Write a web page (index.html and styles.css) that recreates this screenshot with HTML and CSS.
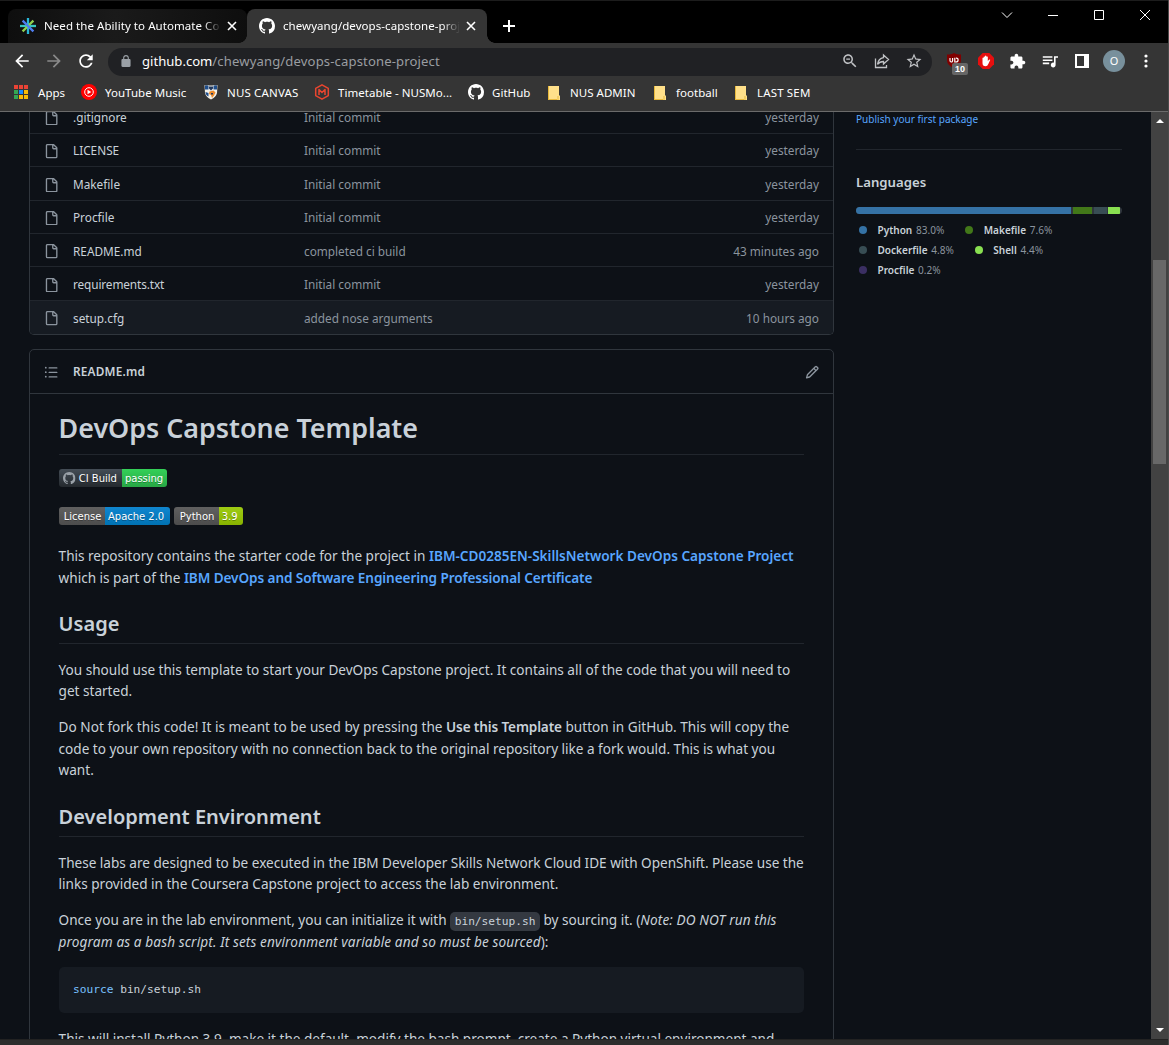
FILE: index.html
```
<!DOCTYPE html>
<html lang="en">
<head>
<meta charset="utf-8">
<title>chewyang/devops-capstone-project</title>
<link rel="stylesheet" href="styles.css">
</head>
<body>
<svg width="0" height="0" class="defs" aria-hidden="true">
  <symbol id="mark" viewBox="0 0 16 16"><path d="M8 0C3.58 0 0 3.58 0 8c0 3.54 2.29 6.53 5.47 7.59.4.07.55-.17.55-.38 0-.19-.01-.82-.01-1.49-2.01.37-2.53-.49-2.69-.94-.09-.23-.48-.94-.82-1.13-.28-.15-.68-.52-.01-.53.63-.01 1.08.58 1.23.82.72 1.21 1.87.87 2.33.66.07-.52.28-.87.51-1.07-1.78-.2-3.64-.89-3.64-3.95 0-.87.31-1.59.82-2.15-.08-.2-.36-1.02.08-2.12 0 0 .67-.21 2.2.82.64-.18 1.32-.27 2-.27.68 0 1.36.09 2 .27 1.53-1.04 2.2-.82 2.2-.82.44 1.1.16 1.92.08 2.12.51.56.82 1.27.82 2.15 0 3.07-1.87 3.75-3.65 3.95.29.25.54.73.54 1.48 0 1.07-.01 1.93-.01 2.2 0 .21.15.46.55.38A8.013 8.013 0 0016 8c0-4.42-3.58-8-8-8z"/></symbol>
  <symbol id="file" viewBox="0 0 16 16"><path d="M2 1.75C2 .784 2.784 0 3.75 0h6.586c.464 0 .909.184 1.237.513l2.914 2.914c.329.328.513.773.513 1.237v9.586A1.75 1.75 0 0 1 13.25 16h-9.5A1.75 1.75 0 0 1 2 14.25Zm1.75-.25a.25.25 0 0 0-.25.25v12.5c0 .138.112.25.25.25h9.5a.25.25 0 0 0 .25-.25V6h-2.75A1.75 1.75 0 0 1 9 4.25V1.5Zm6.75.062V4.25c0 .138.112.25.25.25h2.688l-.011-.013-2.914-2.914-.013-.011Z"/></symbol>
  <symbol id="folder" viewBox="0 0 12 14"><path fill="#ffe08a" d="M0 0h11v9.500h1V14H0z"/><path fill="#e8b93c" d="M0 0h1v14H0zM9.500 10h1v4h-1zM0 13h9v1H0z"/></symbol>
</svg>

<div class="window">
  <header class="tabstrip">
    <div class="tab tab-idle">
      <svg class="favicon" viewBox="0 0 16 16" fill="none" stroke-width="2.300"><path stroke="#29b6d8" d="M8 0v16"/><path stroke="#37c6c0" d="M0 8h16"/><path stroke="#4f7df0" d="M2.600 2.600l10.800 10.800"/><path stroke="#8fd14f" d="M13.400 2.600l-4.400 4.400M7 9l-4.400 4.400"/></svg>
      <span class="tab-title">Need the Ability to Automate Co</span>
      <svg class="close" viewBox="0 0 10 10"><path d="M1 1l8 8M9 1l-8 8"/></svg>
    </div>
    <div class="tab tab-active">
      <svg class="favicon" fill="#fff"><use href="#mark"/></svg>
      <span class="tab-title">chewyang/devops-capstone-proj</span>
      <svg class="close" viewBox="0 0 10 10"><path d="M1 1l8 8M9 1l-8 8"/></svg>
    </div>
    <svg class="newtab" viewBox="0 0 12 12"><path d="M6 0v12M0 6h12" stroke="#fff" stroke-width="2"/></svg>
    <div class="controls">
      <svg viewBox="0 0 12 12"><path d="M1 3.500l5 5 5-5"/></svg>
      <svg viewBox="0 0 12 12"><path d="M1 6.500h10"/></svg>
      <svg viewBox="0 0 12 12"><path d="M1.500 1.500h9v9h-9z"/></svg>
      <svg viewBox="0 0 12 12"><path d="M1 1l10 10M11 1L1 11"/></svg>
    </div>
  </header>

  <div class="toolbar">
    <div class="nav">
      <svg viewBox="0 0 24 24" fill="#fff"><path d="M20 11H7.830l5.590-5.590L12 4l-8 8 8 8 1.410-1.410L7.830 13H20v-2z"/></svg>
      <svg viewBox="0 0 24 24" fill="#8a8a8a"><path d="M12 4l-1.410 1.410L16.170 11H4v2h12.170l-5.580 5.590L12 20l8-8z"/></svg>
      <svg viewBox="0 0 24 24" fill="#fff"><path d="M17.650 6.350C16.200 4.900 14.210 4 12 4c-4.420 0-7.990 3.580-7.990 8s3.570 8 7.990 8c3.730 0 6.840-2.550 7.730-6h-2.080c-.82 2.330-3.040 4-5.650 4-3.310 0-6-2.690-6-6s2.690-6 6-6c1.660 0 3.140.69 4.220 1.780L13 11h7V4l-2.350 2.350z"/></svg>
    </div>
    <div class="omnibox">
      <svg class="lock" viewBox="4 1 16 21" fill="#9aa0a6"><path fill-rule="evenodd" d="M18 8h-1V6c0-2.760-2.240-5-5-5S7 3.240 7 6v2H6c-1.100 0-2 .9-2 2v10c0 1.100.9 2 2 2h12c1.100 0 2-.9 2-2V10c0-1.100-.9-2-2-2zM9 6c0-1.660 1.340-3 3-3s3 1.340 3 3v2H9z"/></svg>
      <span class="url"><b>github.com</b>/chewyang/devops-capstone-project</span>
      <div class="actions">
        <svg viewBox="0 0 24 24" fill="#c0c2c5"><path d="M15.500 14h-.79l-.28-.27C15.410 12.590 16 11.110 16 9.500 16 5.910 13.090 3 9.500 3S3 5.910 3 9.500 5.910 16 9.500 16c1.610 0 3.090-.59 4.230-1.570l.27.28v.79l5 4.990L20.490 19l-4.990-5zm-6 0C7.010 14 5 11.990 5 9.500S7.010 5 9.500 5 14 7.010 14 9.500 11.990 14 9.500 14zM7 8.700h5v1.600H7z"/></svg>
        <svg viewBox="0 0 18 18" fill="none" stroke="#c0c2c5" stroke-width="1.300"><path d="M2.500 6.500v9h11V13M10.500 3l5 4.500-5 4.500V9.500c-2.500 0-4.500.8-6 2.800.5-3.500 2.500-6 6-6.600z"/></svg>
        <svg viewBox="0 0 24 24" fill="#c0c2c5"><path d="M22 9.240l-7.190-.62L12 2 9.190 8.630 2 9.240l5.460 4.730L5.820 21 12 17.270 18.180 21l-1.630-7.030L22 9.240zM12 15.400l-3.760 2.270 1-4.280-3.320-2.880 4.380-.38L12 6.100l1.710 4.040 4.380.38-3.320 2.880 1 4.280L12 15.400z"/></svg>
      </div>
    </div>
    <div class="extensions">
      <span class="shield">
        <svg viewBox="0 0 14 15"><path fill="#800000" d="M7 0c2 1.200 4 1.600 7 1.600V7c0 4-3 6.500-7 8-4-1.500-7-4-7-8V1.600C3 1.600 5 1.200 7 0z"/><path fill="none" stroke="#fff" stroke-width="1.200" d="M3 5v2.500q0 1.500 1.300 1.500T5.600 7.500V5M7.800 4.800V9h1q2.300 0 2.300-2T9 5.200"/></svg>
        <span class="count">10</span>
      </span>
      <svg viewBox="0 0 16 16"><path fill="#e60f0f" d="M4.700 0h6.600L16 4.700v6.600L11.300 16H4.700L0 11.300V4.700z"/><path fill="#fff" d="M4.500 8.500V5q.6-.8 1.200 0V3.800q.6-.8 1.300 0V3q.7-.8 1.400 0v.8q.7-.8 1.400 0V8l1.500-1.500q1-.2.900.6L10.300 11q-.8 2.300-2.700 2.300-3.100 0-3.100-3.300z"/></svg>
      <svg viewBox="0 0 24 24" fill="#fff" class="s18"><path d="M20.500 11H19V7c0-1.100-.9-2-2-2h-4V3.500C13 2.120 11.880 1 10.500 1S8 2.120 8 3.500V5H4c-1.100 0-1.990.9-1.990 2v3.800H3.500c1.490 0 2.700 1.210 2.700 2.700s-1.210 2.700-2.700 2.700H2V20c0 1.100.9 2 2 2h3.800v-1.500c0-1.490 1.210-2.700 2.700-2.700 1.490 0 2.700 1.210 2.700 2.700V22H17c1.100 0 2-.9 2-2v-4h1.500c1.380 0 2.500-1.120 2.500-2.500S21.880 11 20.500 11z"/></svg>
      <svg viewBox="2 2 20 20" fill="#fff"><path d="M15 6H3v2h12V6zm0 4H3v2h12v-2zM3 16h8v-2H3v2zM17 6v8.180c-.31-.11-.65-.18-1-.18-1.660 0-3 1.340-3 3s1.340 3 3 3 3-1.340 3-3V8h3V6h-5z"/></svg>
      <svg viewBox="0 0 16 16" fill="none"><path stroke="#fff" stroke-width="2" d="M2 2h12v12H2z"/><path fill="#fff" d="M10 2h5v12h-5z"/></svg>
      <span class="avatar">O</span>
      <svg viewBox="0 0 16 16" fill="#fff"><circle cx="8" cy="3" r="1.600"/><circle cx="8" cy="8" r="1.600"/><circle cx="8" cy="13" r="1.600"/></svg>
    </div>
  </div>

  <nav class="bookmarks">
    <a><svg viewBox="0 0 16 16"><path fill="#ea4335" d="M1 1h4v4H1zM6 1h4v4H6zM11 1h4v4h-4z"/><path fill="#34a853" d="M1 6h4v4H1zM1 11h4v4H1z"/><path fill="#1a8cff" d="M6 6h4v4H6z"/><path fill="#fbbc05" d="M11 6h4v4h-4zM6 11h4v4H6zM11 11h4v4h-4z"/></svg>Apps</a>
    <a><svg viewBox="0 0 16 16"><circle cx="8" cy="8" r="8" fill="#f00"/><circle cx="8" cy="8" r="4.300" fill="none" stroke="#fff"/><path fill="#fff" d="M6.500 5.700L10.300 8l-3.800 2.300z"/></svg>YouTube Music</a>
    <a><svg viewBox="0 0 16 16"><path fill="#f3f1ea" d="M1.500 1q2.500 1 3.500 0 3 1 6 0 1.500 1 3.500 0l-.5 8q-1 4-6 6.500-5-2.500-6-6.500z"/><path fill="#1f4e8c" d="M2 1.500h3.500v4H2zM10.500 1.500H14v4h-3.500zM2.500 8l3 1v3.500Q2.500 11 2.500 8z"/><path fill="#ee8a2a" d="M6.500 7.500l4-1 2 2-1.500 3-2 2.500-1-3-2-1z"/><path fill="#243a5e" d="M6 2.500h4v2L8 6.500l-2-2zM8 9h2v1.500H8z"/></svg>NUS CANVAS</a>
    <a><svg viewBox="0 0 16 16" fill="none" stroke="#e8452f" stroke-width="1.500" stroke-linejoin="round"><path d="M8 .8l6.300 3.600v7.200L8 15.200l-6.300-3.600V4.400z"/><path d="M5 11V5.500l3 3 3-3V11"/></svg>Timetable - NUSMo...</a>
    <a><svg fill="#fff"><use href="#mark"/></svg>GitHub</a>
    <a><svg class="fold"><use href="#folder"/></svg>NUS ADMIN</a>
    <a><svg class="fold"><use href="#folder"/></svg>football</a>
    <a><svg class="fold"><use href="#folder"/></svg>LAST SEM</a>
  </nav>

  <div class="viewport">
    <main class="page">
      <div class="files">
        <div class="row"><svg><use href="#file"/></svg><span class="name">.gitignore</span><span class="msg">Initial commit</span><span class="age">yesterday</span></div>
        <div class="row"><svg><use href="#file"/></svg><span class="name">LICENSE</span><span class="msg">Initial commit</span><span class="age">yesterday</span></div>
        <div class="row"><svg><use href="#file"/></svg><span class="name">Makefile</span><span class="msg">Initial commit</span><span class="age">yesterday</span></div>
        <div class="row"><svg><use href="#file"/></svg><span class="name">Procfile</span><span class="msg">Initial commit</span><span class="age">yesterday</span></div>
        <div class="row"><svg><use href="#file"/></svg><span class="name">README.md</span><span class="msg">completed ci build</span><span class="age">43 minutes ago</span></div>
        <div class="row"><svg><use href="#file"/></svg><span class="name tight">requirements.txt</span><span class="msg">Initial commit</span><span class="age">yesterday</span></div>
        <div class="row hover"><svg><use href="#file"/></svg><span class="name">setup.cfg</span><span class="msg">added nose arguments</span><span class="age">10 hours ago</span></div>
      </div>

      <section class="readme">
        <div class="readme-head">
          <svg viewBox="0 0 16 16"><path d="M2 4a1 1 0 100-2 1 1 0 000 2zm3.750-1.500a.75.75 0 000 1.500h8.500a.75.75 0 000-1.500h-8.500zm0 5a.75.75 0 000 1.500h8.500a.75.75 0 000-1.500h-8.500zm0 5a.75.75 0 000 1.500h8.500a.75.75 0 000-1.500h-8.500zM3 8a1 1 0 11-2 0 1 1 0 012 0zm-1 6a1 1 0 100-2 1 1 0 000 2z"/></svg>
          <b>README.md</b>
          <svg viewBox="0 0 16 16"><path d="M11.013 1.427a1.750 1.750 0 012.474 0l1.086 1.086a1.750 1.750 0 010 2.474l-8.610 8.610c-.21.21-.47.364-.756.445l-3.251.93a.75.75 0 01-.927-.928l.929-3.250a1.750 1.750 0 01.445-.758l8.610-8.610zm1.414 1.060a.25.25 0 00-.354 0L10.811 3.750l1.439 1.440 1.263-1.263a.25.25 0 000-.354l-1.086-1.086zM11.189 6.250L9.750 4.810l-6.286 6.287a.25.25 0 00-.064.108l-.558 1.953 1.953-.558a.249.249 0 00.108-.064l6.286-6.286z"/></svg>
        </div>
        <article class="markdown">
          <h1>DevOps Capstone Template</h1>
          <div class="badges">
            <span class="badge ci"><i class="l"><svg fill="#9aa1a8"><use href="#mark"/></svg>CI Build</i><i class="r green">passing</i></span>
          </div>
          <div class="badges">
            <span class="badge lic"><i class="l">License</i><i class="r blue">Apache 2.0</i></span>
            <span class="badge py"><i class="l">Python</i><i class="r lime">3.9</i></span>
          </div>
          <p>This repository contains the starter code for the project in <a>IBM-CD0285EN-SkillsNetwork DevOps Capstone Project</a><br>which is part of the <a class="tight">IBM DevOps and Software Engineering Professional Certificate</a></p>
          <h2>Usage</h2>
          <p>You should use this template to start your DevOps Capstone project. It contains all of the code that you will need to<br>get started.</p>
          <p><span class="loose">Do Not fork this code! It is meant to be used by pressing the <strong>Use this Template</strong> button in GitHub. This will copy the</span><br>code to your own repository with no connection back to the original repository like a fork would. This is what you<br>want.</p>
          <h2>Development Environment</h2>
          <p>These labs are designed to be executed in the IBM Developer Skills Network Cloud IDE with OpenShift. Please use the<br>links provided in the Coursera Capstone project to access the lab environment.</p>
          <p>Once you are in the lab environment, you can initialize it with <code>bin/setup.sh</code> by sourcing it. (<em>Note: DO NOT run this<br>program as a bash script. It sets environment variable and so must be sourced</em>):</p>
          <pre><span>source</span> bin/setup.sh</pre>
          <p>This will install Python 3.9, make it the default, modify the bash prompt, create a Python virtual environment and</p>
        </article>
      </section>
    </main>

    <aside class="sidebar">
      <a class="publish">Publish your first package</a>
      <h3>Languages</h3>
      <div class="langbar"><i class="python"></i><i class="makefile"></i><i class="dockerfile"></i><i class="shell"></i></div>
      <ul class="langs">
        <li><i class="python"></i><b>Python</b>83.0%</li>
        <li><i class="makefile"></i><b>Makefile</b>7.6%</li>
        <li><i class="dockerfile"></i><b>Dockerfile</b>4.8%</li>
        <li><i class="shell"></i><b>Shell</b>4.4%</li>
        <li><i class="procfile"></i><b>Procfile</b>0.2%</li>
      </ul>
    </aside>

    <div class="scrollbar">
      <svg viewBox="0 0 8 4"><path d="M4 0l4 4H0z"/></svg>
      <div class="thumb"></div>
      <svg viewBox="0 0 8 4"><path d="M0 0h8L4 4z"/></svg>
    </div>
  </div>
  <div class="edge"></div>
</div>
</body>
</html>
```
FILE: styles.css
```
* { box-sizing: border-box; }
body {
  margin: 0;
  background: #353535;
  font-family: "Noto Sans", "Open Sans", sans-serif;
  color: #c9d1d9;
  overflow: hidden;
}
svg { display: block; flex: none; }
i { font-style: normal; }
.defs { position: absolute; }
.window { width: 1169px; height: 1045px; display: flex; flex-direction: column; border-right: 1px solid #4a4a4a; }

/* Tab strip */
.tabstrip { height: 43px; background: #000; border-top: 1px solid #1c1c1c; display: flex; align-items: flex-end; padding-left: 8px; flex: none; }
.tab { height: 34px; display: flex; align-items: center; color: #fff; font-size: 11.5px; letter-spacing: .06px; padding: 0 11px 0 12px; white-space: nowrap; }
.tab-idle { width: 239px; padding-right: 10px; border-radius: 8px 8px 8px 0; background: linear-gradient(90deg, #0e0e0e, #1a1a1a 45%, #0e0e0e); }
.tab-active { width: 240px; border-radius: 8px 8px 0 0; background: #353535; position: relative; }
.tab-active::before, .tab-active::after { content: ""; position: absolute; bottom: 0; width: 8px; height: 8px; }
.tab-active::before { left: -8px; background: radial-gradient(circle at 0 0, transparent 7.5px, #353535 8px); }
.tab-active::after { right: -8px; background: radial-gradient(circle at 100% 0, transparent 7.5px, #353535 8px); }
.favicon { width: 16px; height: 16px; }
.tab-title { width: 177px; margin-left: 8px; padding-bottom: 2px; -webkit-mask-image: linear-gradient(90deg, #000 90%, transparent); mask-image: linear-gradient(90deg, #000 90%, transparent); }
.close { width: 10px; height: 10px; margin-left: auto; fill: none; stroke: #fff; stroke-width: 1.6; }
.newtab { width: 12px; height: 12px; margin: 0 0 11px 16px; }
.controls { margin-left: auto; display: flex; gap: 34px; padding: 0 17px 22px 0; }
.controls svg { width: 12px; height: 12px; fill: none; stroke: #fff; stroke-width: 1; }

/* Toolbar */
.toolbar { height: 36px; display: flex; align-items: center; padding: 0 6px; flex: none; }
.nav { display: flex; gap: 14px; padding-left: 7px; width: 102px; }
.nav svg { width: 18px; height: 18px; transform: scale(1.12); }
.omnibox { width: 824px; height: 28px; border-radius: 14px; background: #202124; display: flex; align-items: center; padding: 0 9px 2px 13px; margin-top: 1px; }
.lock { width: 10px; height: 12px; }
.url { margin-left: 11px; font-size: 13.1px; letter-spacing: .13px; color: #9a9da1; white-space: nowrap; }
.url b { font-weight: 400; color: #fff; letter-spacing: 0; }
.actions { margin-left: auto; display: flex; gap: 14px; }
.actions svg { width: 18px; height: 18px; }
.extensions { display: flex; align-items: center; margin-left: 6px; }
.extensions > * { width: 16px; height: 16px; margin: 0 8px; flex: none; }
.extensions > .s18 { width: 17px; height: 17px; margin: 0 8px 0 7px; }
.shield { position: relative; }
.shield svg { width: 14px; height: 15px; margin-left: 1px; }
.count { position: absolute; left: 6px; top: 10px; width: 16px; height: 12px; border-radius: 2px; background: #666; color: #fff; font: 700 9px/12px "Liberation Sans", sans-serif; text-align: center; }
.extensions > .avatar { width: 22px; height: 22px; margin: 0 5px; border-radius: 50%; background: #78909c; color: #fff; font-size: 11px; line-height: 22px; text-align: center; }

/* Bookmarks */
.bookmarks { height: 33px; border-bottom: 1px solid #6b6b6b; display: grid; grid-template-columns: 68px 122px 111px 154px 78px 106px 81px auto; align-items: center; padding: 0 0 6px 13px; font-size: 11.5px; color: #fff; letter-spacing: .03px; white-space: nowrap; flex: none; }
.bookmarks a { display: flex; align-items: center; gap: 8px; }
.bookmarks a:first-child { gap: 9px; }
.bookmarks a:nth-child(3), .bookmarks a:nth-child(8) { letter-spacing: .16px; }
.bookmarks svg { width: 16px; height: 16px; }
.bookmarks .fold { width: 12px; height: 14px; margin: 1px 2px 0; }

/* Page */
.viewport { height: 927px; background: #0d1117; display: flex; overflow: hidden; flex: none; }
.page { width: 805px; margin-left: 29px; flex: none; }
.files { margin-top: -12px; border: 1px solid #30363d; border-top: 0; border-radius: 0 0 5px 5px; height: 235px; overflow: hidden; padding-top: .35px; }
.row { height: 33.4px; border-bottom: 1px solid #21262d; display: flex; align-items: center; font-size: 11.8px; color: #8b949e; padding: .8px 14px 0; white-space: nowrap; }
.row svg { width: 14.4px; height: 14.4px; fill: #8b949e; margin-top: 2px; }
.row .name { width: 231px; margin-left: 14.6px; color: #c9d1d9; }
.row .tight { letter-spacing: -.11px; }
.row .age { margin-left: auto; }
.row.hover { background: #161b22; border-bottom: 0; height: 34px; padding-top: 0; }
.readme { margin-top: 14px; border: 1px solid #30363d; border-radius: 5px 5px 0 0; height: 700px; overflow: hidden; }
.readme-head { height: 44px; border-bottom: 1px solid #30363d; display: flex; align-items: center; padding: 0 14px; font-size: 11.8px; }
.readme-head b { font-weight: 600; margin: 0 auto 0 14.6px; letter-spacing: .21px; padding-bottom: 2px; }
.readme-head svg { width: 14.4px; height: 14.4px; fill: #8b949e; margin-top: 1px; }
.markdown { padding: 16px 29px 0 28.6px; font-size: 13.6px; line-height: 21.6px; }
.markdown p { margin: 0 0 14.4px; white-space: nowrap; letter-spacing: -.015px; }
h1, h2, h3 { font-weight: 600; margin: 0; }
h1 { font-size: 26.85px; line-height: 36px; padding-bottom: 8px; border-bottom: 1px solid #21262d; margin-bottom: 14px; }
h2 { font-size: 20.05px; line-height: 27px; padding-bottom: 6.5px; border-bottom: 1px solid #21262d; margin: 21.6px 0 14.4px; }
.markdown a { color: #58a6ff; font-weight: 600; }
.markdown .tight { letter-spacing: -.09px; }
.markdown .loose { letter-spacing: .02px; }
.markdown strong { font-weight: 600; letter-spacing: -.14px; }
.markdown em { letter-spacing: .12px; }
.badges { display: flex; gap: 4px; height: 18px; margin-bottom: 20px; }
.badge { display: flex; height: 18px; border-radius: 3px; overflow: hidden; font: 10px/18px "DejaVu Sans", sans-serif; color: #fff; text-shadow: 0 1px 0 rgba(1,1,1,.3); }
.badge i { display: flex; align-items: center; justify-content: center; letter-spacing: -.02px; padding-top: 1px; }
.badge .l { background: linear-gradient(#606060, #4c4c4c); }
.badge .l { padding-left: 2px; }
.badge .r { padding-right: 2px; }
.badge svg { width: 12.5px; height: 12.5px; margin: -1px 3px 0 0; }
.badge.ci .l { width: 63px; padding-left: 0; background: linear-gradient(#444d56, #24292e); }
.badge.ci .r { width: 45px; padding-right: 0; }
.green { background: linear-gradient(#34d058, #28a745); }
.lic .l { width: 46px; }
.lic .r { width: 65px; }
.blue { background: linear-gradient(#1086cf, #0072b3); }
.py .l { width: 45px; }
.py .r { width: 24px; }
.lime { background: linear-gradient(#9fcc14, #88b300); }
code, pre { font-family: "DejaVu Sans Mono", monospace; font-size: 11.2px; letter-spacing: 0; }
code { background: #343941; border-radius: 5px; padding: 3px 4.5px; line-height: 12px; }
pre { margin: 0 0 14.4px; background: #161b22; border-radius: 5px; padding: 14.4px; line-height: 17.7px; }
pre span { color: #79c0ff; }

/* Sidebar */
.sidebar { width: 266px; margin-left: 22px; font-size: 10.05px; flex: none; }
.publish { display: block; height: 38px; line-height: 15px; border-bottom: 1px solid #21262d; color: #58a6ff; }
h3 { font-size: 13.2px; line-height: 20px; margin-top: 22px; }
.langbar { height: 7px; margin-top: 15px; border-radius: 4px; overflow: hidden; background: #30363d; display: flex; gap: 2px; }
.langbar i:nth-child(1) { width: 215px; }
.langbar i:nth-child(2) { width: 19px; }
.langbar i:nth-child(3) { width: 13px; }
.langbar i:nth-child(4) { width: 12px; margin-left: -1px; }
.python { background: #3572a5; }
.makefile { background: #427819; }
.dockerfile { background: #384d54; }
.shell { background: #89e051; }
.procfile { background: #3b2f63; }
.langs { list-style: none; margin: 6px 0 0; padding: 0; display: flex; flex-wrap: wrap; color: #8b949e; }
.langs li { display: flex; align-items: center; height: 20px; margin-right: 18px; white-space: nowrap; }
.langs b { color: #c9d1d9; font-weight: 600; margin-right: 3.7px; }
.langs li i { width: 8px; height: 8px; border-radius: 50%; margin: 0 10.5px 0 3px; }

/* Scrollbar and window edge */
.scrollbar { width: 17px; margin-left: auto; background: #424242; display: flex; flex-direction: column; align-items: center; padding: 7px 0; }
.scrollbar svg { width: 8px; height: 4px; fill: #fff; }
.thumb { width: 13px; height: 204px; margin: 137px 0 auto; background: #686868; }
.edge { height: 6px; background: #2d2d2d; border-top: 1px solid #222; }
```
